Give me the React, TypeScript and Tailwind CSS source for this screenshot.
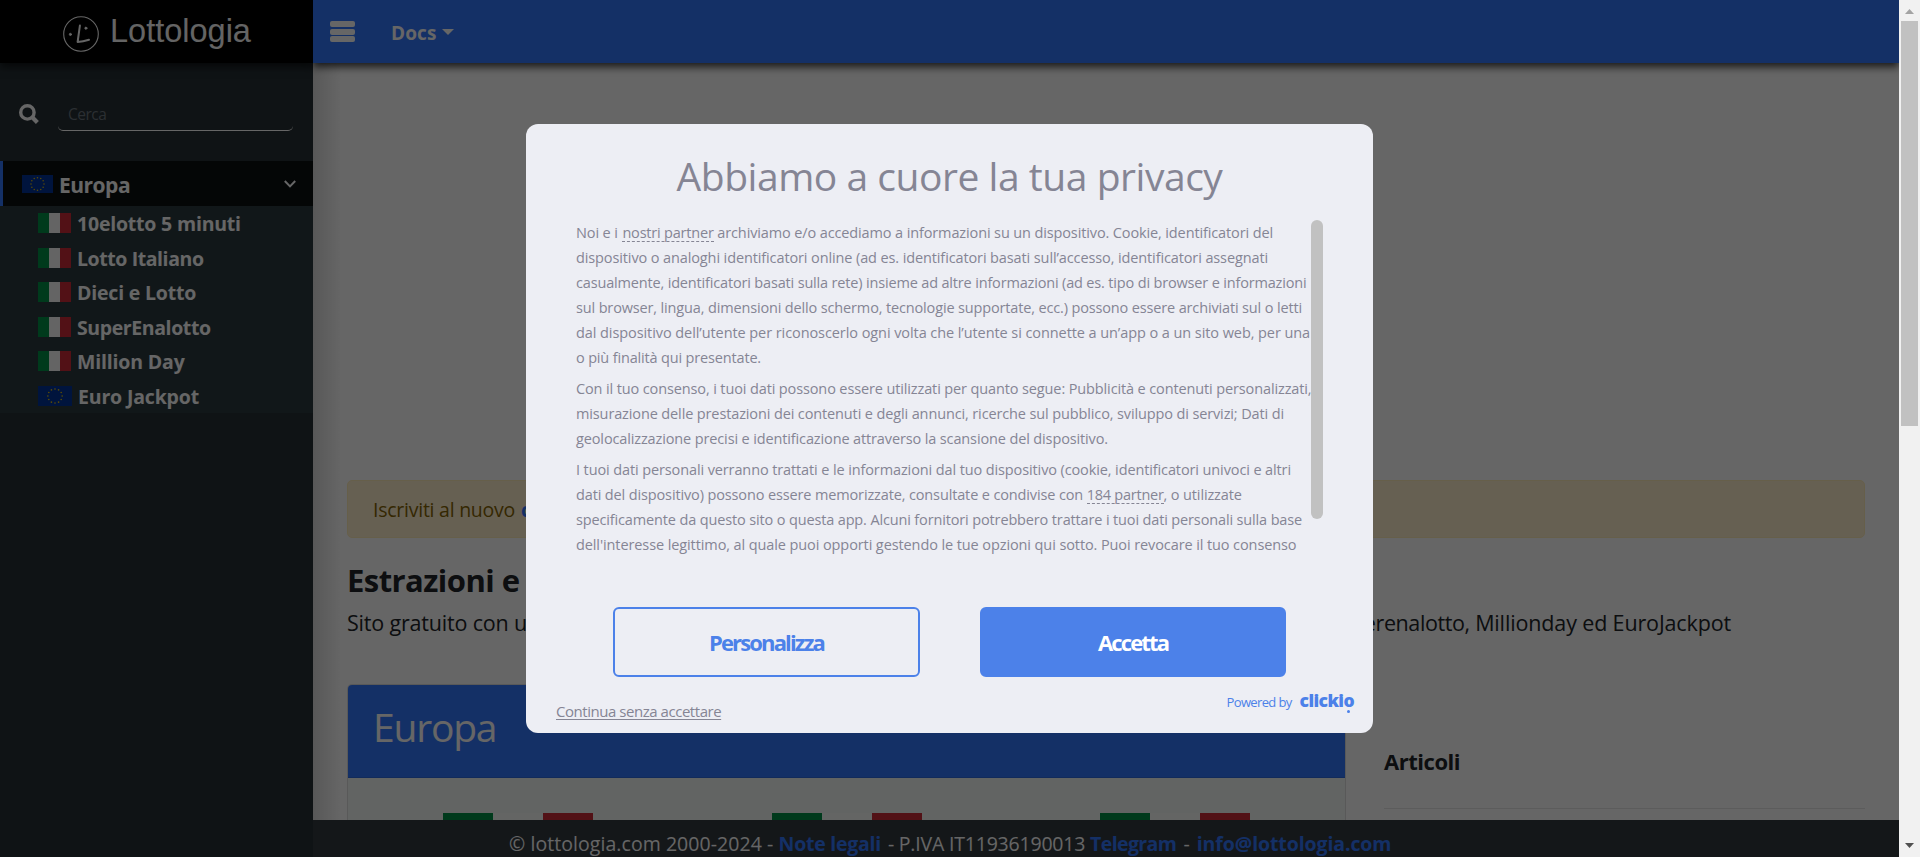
import type { ReactNode } from "react";

function ItalyFlag() {
  return (
    <span className="flex h-5 w-[33px] shrink-0">
      <span className="flex-1 bg-[#009246]" />
      <span className="flex-1 bg-[#f9fbf9]" />
      <span className="flex-1 bg-[#ce2b37]" />
    </span>
  );
}

function EuropeFlag({ className }: { className: string }) {
  const stars = Array.from({ length: 12 }, (_, i) => {
    const a = (i * Math.PI) / 6;
    return <circle key={i} cx={15 + 6.3 * Math.sin(a)} cy={9 - 6.3 * Math.cos(a)} r="0.75" fill="#e0bd10" />;
  });
  return (
    <svg viewBox="0 0 30 18" preserveAspectRatio="none" className={className}>
      <rect width="30" height="18" fill="#003399" />
      {stars}
    </svg>
  );
}

function LogoMark() {
  return (
    <svg viewBox="0 0 36 36" className="size-9" fill="none" stroke="#fff" strokeLinecap="round" strokeLinejoin="round">
      <circle cx="18" cy="18" r="17.3" strokeWidth="1.1" />
      <path d="M16.9 9.6 L14.6 26 Q20 25.6 26 23.8" strokeWidth="2" />
      <circle cx="7.4" cy="18.4" r="1.1" fill="#fff" strokeWidth="0.8" />
      <circle cx="22.9" cy="12.2" r="1.1" fill="#fff" strokeWidth="0.8" />
    </svg>
  );
}

const games: { name: string; eu?: boolean; track: string }[] = [
  { name: "10elotto 5 minuti", track: "tracking-[-0.2px]" },
  { name: "Lotto Italiano", track: "tracking-[-0.42px]" },
  { name: "Dieci e Lotto", track: "tracking-[-0.2px]" },
  { name: "SuperEnalotto", track: "tracking-[-0.4px]" },
  { name: "Million Day", track: "tracking-[-0.17px]" },
  { name: "Euro Jackpot", eu: true, track: "tracking-[-0.17px]" },
];

function Sidebar() {
  return (
    <aside className="flex w-[313px] shrink-0 flex-col bg-[#263035]">
      <div className="flex h-[63px] shrink-0 bg-black pl-[63px] shadow-[0_4px_8px_rgba(0,0,0,0.6)]">
        <div className="pt-4">
          <LogoMark />
        </div>
        <span className="ml-[11px] pt-px font-['Liberation_Sans',sans-serif] text-[32.5px] leading-[60px] text-[#fafafa]">
          Lottologia
        </span>
      </div>
      <div className="mt-[30px] flex h-[38px] items-center">
        <svg viewBox="0 0 20 20" className="mt-1 ml-[19px] size-5" fill="none" stroke="#fff" strokeWidth="3.4">
          <circle cx="8.4" cy="8.4" r="6.7" />
          <path d="M13 13 L18.4 18.4" strokeWidth="4.2" />
        </svg>
        <div className="ml-[19px] h-[38px] w-[235px] rounded-[5px] border-b border-white pt-[3px] pl-2.5 text-[15.5px] leading-[36px] tracking-[-0.5px] text-[#6c757d]">
          Cerca
        </div>
      </div>
      <div className="mt-[30px] flex h-[45px] items-center border-l-[3px] border-[#3378ff] bg-[#0b0f11] pr-[17px] pl-[19px]">
        <EuropeFlag className="h-[18px] w-[31px]" />
        <span className="ml-1.5 flex-1 pt-1 text-[21px] font-bold tracking-[-0.5px] text-white">Europa</span>
        <svg viewBox="0 0 12 8" className="h-2 w-3" fill="none" stroke="#fff" strokeWidth="2">
          <path d="M0.8 1 L6 6.4 L11.2 1" />
        </svg>
      </div>
      <ul className="bg-[#2c3b40]">
        {games.map((g) => (
          <li key={g.name} className="flex h-[34.5px] items-center gap-1.5 pl-[38px]">
            {g.eu ? <EuropeFlag className="h-5 w-[34px]" /> : <ItalyFlag />}
            <span className={`pt-0.5 text-[19.5px] leading-8 font-bold text-white ${g.track}`}>{g.name}</span>
          </li>
        ))}
      </ul>
    </aside>
  );
}

function CardFlag() {
  return (
    <div className="flex h-9 w-[150px]">
      <span className="flex-1 bg-[#009246]" />
      <span className="flex-1 bg-[#f9fcf9]" />
      <span className="flex-1 bg-[#ce2b37]" />
    </div>
  );
}

function Content() {
  return (
    <div className="flex min-w-0 flex-1 flex-col bg-white text-[#212529]">
      <nav className="z-10 flex h-[63px] shrink-0 items-center bg-[#3378ff] pl-[17px] shadow-[0_4px_8px_rgba(0,0,0,0.75)]">
        <div className="flex flex-col gap-[1.6px]">
          <span className="h-1.5 w-[25px] rounded-[2px] bg-white" />
          <span className="h-1.5 w-[25px] rounded-[2px] bg-white" />
          <span className="h-1.5 w-[25px] rounded-[2px] bg-white" />
        </div>
        <span className="ml-9 pt-[3px] text-[19px] leading-[30px] font-bold tracking-[0.1px] text-white">Docs</span>
        <svg viewBox="0 0 12 6" className="ml-1.5 h-1.5 w-3" fill="#fff">
          <path d="M0 0H12L6 6Z" />
        </svg>
      </nav>
      <main className="h-[757px] shrink-0 bg-linear-to-r from-[#dcdcdc] to-white to-[28px] pt-[417px] pr-[34px] pl-[34px]">
        <div className="h-[58px] rounded-[5px] border border-[#ffeeba] bg-[#fff0cd] pl-[25px] text-[19.5px] leading-[58px] text-[#856404]">
          <span className="tracking-[-0.25px]">Iscriviti al nuovo</span>{" "}
          <b className="ml-px text-[#3378ff]">chat</b>
        </div>
        <h1 className="mt-[22px] text-[31px] leading-10 font-bold tracking-[-0.55px]">Estrazioni e</h1>
        <div className="mt-[7px] flex w-[1384px] justify-between text-[21.5px] leading-8">
          <span className="tracking-[-0.18px]">Sito gratuito con u</span>
          <span className="tracking-[-0.14px]">
            <span className="tracking-[-0.4px]">erenalotto,</span> Millionday ed EuroJackpot
          </span>
        </div>
        <div className="mt-[45px] flex gap-[38px]">
          <section className="h-[136px] w-[999px] overflow-hidden rounded-t-[5px] border border-b-0 border-[#dfdfdf] bg-[#f6fbf8]">
            <h2 className="h-[93px] border-b border-[#2d6be3] bg-[#3378ff] pl-[25px] text-[39px] leading-[83px] tracking-[-1.2px] text-white">
              Europa
            </h2>
            <div className="flex gap-[178.5px] pt-[35px] pl-[95px]">
              <CardFlag />
              <CardFlag />
              <CardFlag />
            </div>
          </section>
          <section className="flex-1 pt-[61px]">
            <h3 className="border-b border-[#e5e5e5] pb-[31px] text-[22px] leading-8 font-bold tracking-[-0.47px]">Articoli</h3>
          </section>
        </div>
      </main>
      <footer className="h-[37px] shrink-0 overflow-hidden bg-[#343a40] pl-[196px] text-[19.5px] leading-[48px] whitespace-nowrap text-white">
        <span className="tracking-[0.06px]">© lottologia.com 2000-2024 - </span>
        <b className="tracking-[-0.24px] text-[#3378ff]">Note legali</b>
        <span className="ml-0.5 tracking-[-0.2px]"> - P.IVA IT11936190013 </span>
        <b className="tracking-[-0.6px] text-[#3378ff]">Telegram</b>
        <span className="px-0.5"> - </span>
        <b className="tracking-[-0.1px] text-[#3378ff]">info@lottologia.com</b>
      </footer>
    </div>
  );
}

function Line({ track, children }: { track: string; children: ReactNode }) {
  return <span className={`block whitespace-nowrap ${track}`}>{children}</span>;
}

function Consent() {
  return (
    <div className="flex h-[609px] w-[847px] flex-col rounded-xl bg-[#edeef4] pt-[27px] text-[#858594]">
      <h2 className="text-center text-[39px] leading-[50px] tracking-[-0.46px]">Abbiamo a cuore la tua privacy</h2>
      <div className="mt-[19px] ml-[50px] flex h-[345px] items-start">
        <div className="w-[735px] space-y-1.5 text-[14.5px] leading-[25px]">
          <p>
            <Line track="tracking-[-0.125px]">
              Noi e i{" "}
              <span className="ml-px inline-block h-[22px] border-b border-dashed border-[#858594] leading-[25px] tracking-[-0.2px]">
                nostri partner
              </span>{" "}
              archiviamo e/o accediamo a informazioni su un dispositivo. Cookie, identificatori del
            </Line>
            <Line track="tracking-[-0.115px]">
              dispositivo o analoghi identificatori online (ad es. identificatori basati sull’accesso, identificatori assegnati
            </Line>
            <Line track="tracking-[-0.167px]">
              casualmente, identificatori basati sulla rete) insieme ad altre informazioni (ad es. tipo di browser e informazioni
            </Line>
            <Line track="tracking-[-0.149px]">
              sul browser, lingua, dimensioni dello schermo, tecnologie supportate, ecc.) possono essere archiviati sul o letti
            </Line>
            <Line track="tracking-[-0.078px]">
              dal dispositivo dell’utente per riconoscerlo ogni volta che l’utente si connette a un’app o a un sito web, per una
            </Line>
            <Line track="tracking-[-0.163px]">o più finalità qui presentate.</Line>
          </p>
          <p>
            <Line track="tracking-[-0.125px]">
              Con il tuo consenso, i tuoi dati possono essere utilizzati per quanto segue: Pubblicità e contenuti personalizzati,
            </Line>
            <Line track="tracking-[-0.126px]">
              misurazione delle prestazioni dei contenuti e degli annunci, ricerche sul pubblico, sviluppo di servizi; Dati di
            </Line>
            <Line track="tracking-[-0.13px]">
              geolocalizzazione precisi e identificazione attraverso la scansione del dispositivo.
            </Line>
          </p>
          <p>
            <Line track="tracking-[-0.115px]">
              I tuoi dati personali verranno trattati e le informazioni dal tuo dispositivo (cookie, identificatori univoci e altri
            </Line>
            <Line track="tracking-[-0.134px]">
              dati del dispositivo) possono essere memorizzate, consultate e condivise con{" "}
              <span className="inline-block h-[22px] border-b border-dashed border-[#858594] leading-[25px] tracking-[-0.25px]">
                184 partner
              </span>
              , o utilizzate
            </Line>
            <Line track="tracking-[-0.143px]">
              specificamente da questo sito o questa app. Alcuni fornitori potrebbero trattare i tuoi dati personali sulla base
            </Line>
            <Line track="tracking-[-0.1px]">
              dell'interesse legittimo, al quale puoi opporti gestendo le tue opzioni qui sotto. Puoi revocare il tuo consenso
            </Line>
          </p>
        </div>
        <div className="h-[299px] w-3 rounded-full bg-[#c1c1c1]" />
      </div>
      <div className="mt-[42px] ml-[87px] flex h-[70px] gap-[60px] text-[22px] leading-[66px] font-bold">
        <button className="w-[307px] rounded-[6px] border-2 border-[#4c81e9] tracking-[-1.85px] text-[#4c81e9]">Personalizza</button>
        <button className="w-[306px] rounded-[6px] border-2 border-[#4c81e9] bg-[#4c81e9] tracking-[-1.85px] text-white">Accetta</button>
      </div>
      <div className="mt-3 flex items-start justify-between pr-[19px] pl-[30px]">
        <span className="mt-2.5 text-[15px] leading-6 tracking-[-0.46px] underline underline-offset-2">Continua senza accettare</span>
        <span className="flex items-start text-[#4c81e9]">
          <span className="pt-px text-[13px] leading-6 tracking-[-0.64px]">Powered by</span>
          <span className="relative ml-2 text-[17.5px] leading-[23px] font-extrabold tracking-[-0.6px]">
            clickio
            <span className="absolute right-1 -bottom-px size-[3px] rounded-full bg-[#4c81e9]" />
          </span>
        </span>
      </div>
    </div>
  );
}

function WindowScrollbar() {
  return (
    <div className="flex w-[21px] flex-col items-center bg-[#f1f1f1]">
      <svg viewBox="0 0 9 5" className="mt-[9px] h-[5px] w-[9px]" fill="#a3a3a3">
        <path d="M0 5H9L4.5 0Z" />
      </svg>
      <div className="mt-[7px] h-[405px] w-[17px] bg-[#c1c1c1]" />
      <svg viewBox="0 0 9 5" className="mt-auto mb-[9px] h-[5px] w-[9px]" fill="#505050">
        <path d="M0 0H9L4.5 5Z" />
      </svg>
    </div>
  );
}

export default function App() {
  return (
    <div className="flex h-[857px] w-[1920px] overflow-hidden font-['Open_Sans',sans-serif]">
      <div className="relative flex w-[1899px] overflow-hidden">
        <Sidebar />
        <Content />
        <div className="absolute inset-0 z-20 flex items-center justify-center bg-black/60">
          <Consent />
        </div>
      </div>
      <WindowScrollbar />
    </div>
  );
}
